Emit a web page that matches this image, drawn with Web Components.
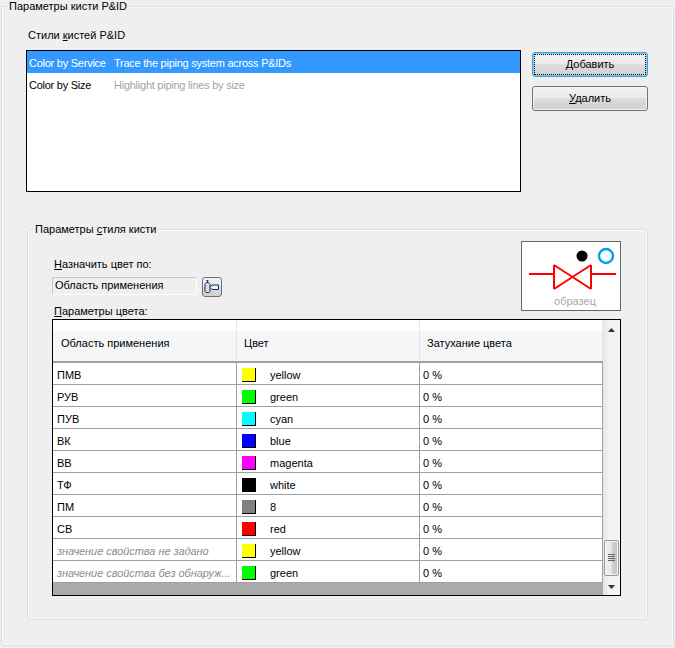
<!DOCTYPE html>
<html lang="ru">
<head>
<meta charset="utf-8">
<title>Параметры кисти P&amp;ID</title>
<style>
html, body { margin: 0; padding: 0; background: #efefef; }
body { font: 11px/13px "Liberation Sans", Arial, sans-serif; color: #000; width: 675px; height: 648px; overflow: hidden; }
</style>
</head>
<body>
<brush-dialog></brush-dialog>

<template id="rows">
  <color-row color="#ffff00"><span slot="name">ПМВ</span><span slot="color">yellow</span></color-row>
  <color-row color="#00ff00"><span slot="name">РУВ</span><span slot="color">green</span></color-row>
  <color-row color="#00ffff"><span slot="name">ПУВ</span><span slot="color">cyan</span></color-row>
  <color-row color="#0000ff"><span slot="name">ВК</span><span slot="color">blue</span></color-row>
  <color-row color="#ff00ff"><span slot="name">ВВ</span><span slot="color">magenta</span></color-row>
  <color-row color="#000000"><span slot="name">ТФ</span><span slot="color">white</span></color-row>
  <color-row color="#808080"><span slot="name">ПМ</span><span slot="color">8</span></color-row>
  <color-row color="#ff0000"><span slot="name">СВ</span><span slot="color">red</span></color-row>
  <color-row color="#ffff00" muted><span slot="name">значение свойства не задано</span><span slot="color">yellow</span></color-row>
  <color-row color="#00ff00" muted><span slot="name">значение свойства без обнаруж...</span><span slot="color">green</span></color-row>
</template>

<script>
class GroupBox extends HTMLElement {
    constructor() {
        super();
        this.attachShadow({mode: 'open'});
        this.shadowRoot.innerHTML = `
            <style>
                :host { display: block; }
                fieldset {
                    margin: 0; padding: 0;
                    height: var(--h, auto); box-sizing: border-box; min-width: 0;
                    border: 1px solid #d5dfe5; border-radius: 3px;
                    box-shadow: inset 0 0 0 1px #fbfbfb;
                }
                legend { margin-left: 5px; padding: 0 2px; background: #efefef; height: 13px; }
                .content { padding: var(--pad, 0); }
            </style>
            <fieldset><legend><slot name="title"></slot></legend><div class="content"><slot></slot></div></fieldset>
        `;
    }
}
customElements.define('group-box', GroupBox);

class ListRow extends HTMLElement {
    constructor() {
        super();
        this.attachShadow({mode: 'open'});
        this.shadowRoot.innerHTML = `
            <style>
                :host { display: flex; align-items: center; box-sizing: border-box; height: 22px; padding: 2px 0 0 2px; letter-spacing: -0.25px; }
                :host([selected]) { background: #3399ff; color: #fff; }
                .name { width: 85px; }
                .desc { color: #a3a3a3; }
                :host([selected]) .desc { color: #fff; }
            </style>
            <div class="name"><slot name="name"></slot></div>
            <div class="desc"><slot name="desc"></slot></div>
        `;
    }
}
customElements.define('list-row', ListRow);

class DlgButton extends HTMLElement {
    constructor() {
        super();
        this.attachShadow({mode: 'open'});
        this.shadowRoot.innerHTML = `
            <style>
                :host {
                    display: flex; align-items: center; justify-content: center;
                    box-sizing: border-box; width: 116px; height: 25px;
                    border: 1px solid #707070; border-radius: 3px;
                    background: linear-gradient(#f2f2f2 0, #ebebeb 48%, #dddddd 50%, #cfcfcf 100%);
                    box-shadow: inset 0 0 0 1px #f6f6f6;
                    position: relative;
                }
                :host([default]) { border-color: #3c9fd1; box-shadow: inset 0 0 0 1px #7fd0f0; }
                .focus { display: none; position: absolute; inset: 1px; border: 1px dotted #000; }
                :host([default]) .focus { display: block; }
            </style>
            <div class="focus"></div><slot></slot>
        `;
    }
}
customElements.define('dlg-button', DlgButton);

class IconButton extends HTMLElement {
    constructor() {
        super();
        this.attachShadow({mode: 'open'});
        this.shadowRoot.innerHTML = `
            <style>
                :host {
                    display: block; box-sizing: border-box; width: 20px; height: 20px;
                    border: 1px solid #707070; border-radius: 3px;
                    background: linear-gradient(#f2f2f2 0, #ebebeb 48%, #dddddd 50%, #cfcfcf 100%);
                }
                svg { display: block; }
            </style>
            <svg width="18" height="18" viewBox="0 0 18 18" fill="none" stroke="#12305f" stroke-width="1">
                <path d="M3.500 2.500h2M4.500 2.500v2" />
                <path d="M3.500 4.500h2l1.500 2v7l-1 1h-3l-1-1v-7z" fill="#d5deea"/>
                <path d="M7 9.500l2-2.500h6.500v4.500h-6.500z" fill="#eef1f5"/>
            </svg>
        `;
    }
}
customElements.define('icon-button', IconButton);

class SamplePreview extends HTMLElement {
    constructor() {
        super();
        this.attachShadow({mode: 'open'});
        this.shadowRoot.innerHTML = `
            <style>
                :host {
                    display: flex; flex-direction: column; align-items: center;
                    box-sizing: border-box; width: 100px; height: 70px; flex: none;
                    border: 1px solid #666; background: #fff;
                }
                svg { display: block; flex: none; }
                .cap { color: #a8a8a8; margin-top: 5px; transform: translateX(4px); }
            </style>
            <svg width="98" height="48" viewBox="0 0 98 48" fill="none">
                <circle cx="60" cy="14" r="5.500" fill="#000"/>
                <circle cx="84" cy="14" r="7" stroke="#0a9df0" stroke-width="2.400"/>
                <g stroke="#f00" stroke-width="2">
                    <path d="M7 32h25M69 32h25" shape-rendering="crispEdges"/>
                    <path d="M32 23v24M69 23v24" shape-rendering="crispEdges"/>
                    <path d="M32 23l37 24M69 23L32 47"/>
                </g>
            </svg>
            <div class="cap"><slot></slot></div>
        `;
    }
}
customElements.define('sample-preview', SamplePreview);

class ColorRow extends HTMLElement {
    constructor() {
        super();
        this.attachShadow({mode: 'open'});
    }

    connectedCallback() {
        const color = this.getAttribute('color');
        this.shadowRoot.innerHTML = `
            <style>
                :host {
                    display: grid; grid-template-columns: 184px 183px 183px;
                    height: 22px; box-sizing: border-box;
                    background: #fff; border-bottom: 1px solid #a0a0a0;
                }
                .cell { display: flex; align-items: center; padding-top: 3px; border-right: 1px solid #a0a0a0; box-sizing: border-box; min-width: 0; }
                .name { padding-left: 4px; white-space: nowrap; overflow: hidden; }
                :host([muted]) .name { color: #8c8c8c; font-style: italic; letter-spacing: -0.05px; }
                .swatch {
                    flex: none; box-sizing: border-box; width: 14px; height: 14px;
                    margin: 0 14px 0 5px; background: ${color};
                    border-right: 1px solid #000; border-bottom: 1px solid #000;
                }
                .fade { padding-left: 3px; }
            </style>
            <div class="cell name"><slot name="name"></slot></div>
            <div class="cell"><div class="swatch"></div><slot name="color"></slot></div>
            <div class="cell fade">0 %</div>
        `;
    }
}
customElements.define('color-row', ColorRow);

class ScrollBar extends HTMLElement {
    constructor() {
        super();
        this.attachShadow({mode: 'open'});
        this.shadowRoot.innerHTML = `
            <style>
                :host {
                    display: flex; flex-direction: column; align-items: center; flex: none;
                    width: 17px; box-sizing: border-box;
                    background: linear-gradient(90deg, #e6e6e6, #f4f4f4 40%, #f4f4f4);
                }
                .arrow { height: 17px; flex: none; display: flex; align-items: center; justify-content: center; }
                .arrow.up { padding-top: 2px; box-sizing: border-box; }
                .thumb {
                    margin-top: auto; margin-bottom: 2px; box-sizing: border-box; width: 15px; height: 36px;
                    border: 1px solid #9a9a9a; border-radius: 2px;
                    background: linear-gradient(90deg, #f2f2f2, #e4e4e4 50%, #cfcfcf 55%, #c4c4c4);
                    box-shadow: inset 0 0 0 1px #f4f4f4;
                    display: flex; align-items: center; justify-content: center;
                }
                svg { display: block; }
            </style>
            <div class="arrow up"><svg width="7" height="4"><path d="M3.500 0L7 4H0z" fill="#333"/></svg></div>
            <div class="thumb"><svg width="7" height="8"><path d="M0 .5h7M0 2.500h7M0 4.500h7M0 6.500h7" stroke="#666"/></svg></div>
            <div class="arrow"><svg width="7" height="4"><path d="M0 0h7L3.500 4z" fill="#333"/></svg></div>
        `;
    }
}
customElements.define('scroll-bar', ScrollBar);

class ColorGrid extends HTMLElement {
    constructor() {
        super();
        this.attachShadow({mode: 'open'});
        this.shadowRoot.innerHTML = `
            <style>
                :host { display: flex; box-sizing: border-box; height: 277px; border: 1px solid #000; background: #ababab; }
                .body { width: 550px; flex: none; }
                .head {
                    display: grid; grid-template-columns: 184px 183px 183px;
                    height: 43px; box-sizing: border-box; border-bottom: 2px solid #a0a0a0;
                    background: linear-gradient(#fff 0, #fff 11px, #f5f6f8 11px, #f5f6f8 100%);
                }
                .head div { display: flex; align-items: center; padding: 5px 0 0 8px; border-right: 1px solid #e4e5e7; box-sizing: border-box; }
                .head div + div { padding-left: 7px; }
            </style>
            <div class="body">
                <div class="head"><div>Область применения</div><div>Цвет</div><div>Затухание цвета</div></div>
                <slot></slot>
            </div>
            <scroll-bar></scroll-bar>
        `;
    }
}
customElements.define('color-grid', ColorGrid);

class BrushDialog extends HTMLElement {
    constructor() {
        super();
        this.attachShadow({mode: 'open'});
        this.shadowRoot.innerHTML = `
            <style>
                :host { display: block; padding-left: 1px; width: 673px; }
                .outer { --h: 646px; --pad: 16px 0 0 24px; }
                .top { display: flex; gap: 11px; }
                .styles { width: 495px; }
                .styles .cap { margin-left: 2px; margin-bottom: 8px; }
                .list { box-sizing: border-box; height: 142px; border: 1px solid #000; background: #fff; }
                .actions { display: flex; flex-direction: column; gap: 9px; padding-top: 23px; }
                .inner { display: block; margin: 31px 0 0 1px; width: 621px; --h: 397px; --pad: 5px 26px 0 24px; }
                .head { display: flex; justify-content: space-between; height: 78px; }
                .left { display: flex; flex-direction: column; padding: 17px 0 1px 2px; }
                .field-row { display: flex; gap: 5px; margin: 6px 0 0 -2px; }
                .field {
                    box-sizing: border-box; width: 145px; height: 18px; padding: 1px 2px;
                    border: 1px solid #c8c8c8; border-right-color: #fff; border-bottom-color: #fff;
                }
                .left .last { margin-top: auto; }
            </style>
            <group-box class="outer">
                <span slot="title">Параметры кисти P&amp;ID</span>
                <div class="top">
                    <div class="styles">
                        <div class="cap">Стили <u>к</u>истей P&amp;ID</div>
                        <div class="list">
                            <list-row selected><span slot="name">Color by Service</span><span slot="desc">Trace the piping system across P&amp;IDs</span></list-row>
                            <list-row><span slot="name">Color by Size</span><span slot="desc">Highlight piping lines by size</span></list-row>
                        </div>
                    </div>
                    <div class="actions">
                        <dlg-button default><span><u>Д</u>обавить</span></dlg-button>
                        <dlg-button><span><u>У</u>далить</span></dlg-button>
                    </div>
                </div>
                <group-box class="inner">
                    <span slot="title">Параметры <u>с</u>тиля кисти</span>
                    <div class="head">
                        <div class="left">
                            <div><u>Н</u>азначить цвет по:</div>
                            <div class="field-row"><div class="field">Область применения</div><icon-button></icon-button></div>
                            <div class="last"><u>П</u>араметры цвета:</div>
                        </div>
                        <sample-preview>образец</sample-preview>
                    </div>
                    <color-grid id="grid"></color-grid>
                </group-box>
            </group-box>
        `;
        const rows = document.getElementById('rows').content.cloneNode(true);
        this.shadowRoot.getElementById('grid').appendChild(rows);
    }
}
customElements.define('brush-dialog', BrushDialog);
</script>
</body>
</html>
